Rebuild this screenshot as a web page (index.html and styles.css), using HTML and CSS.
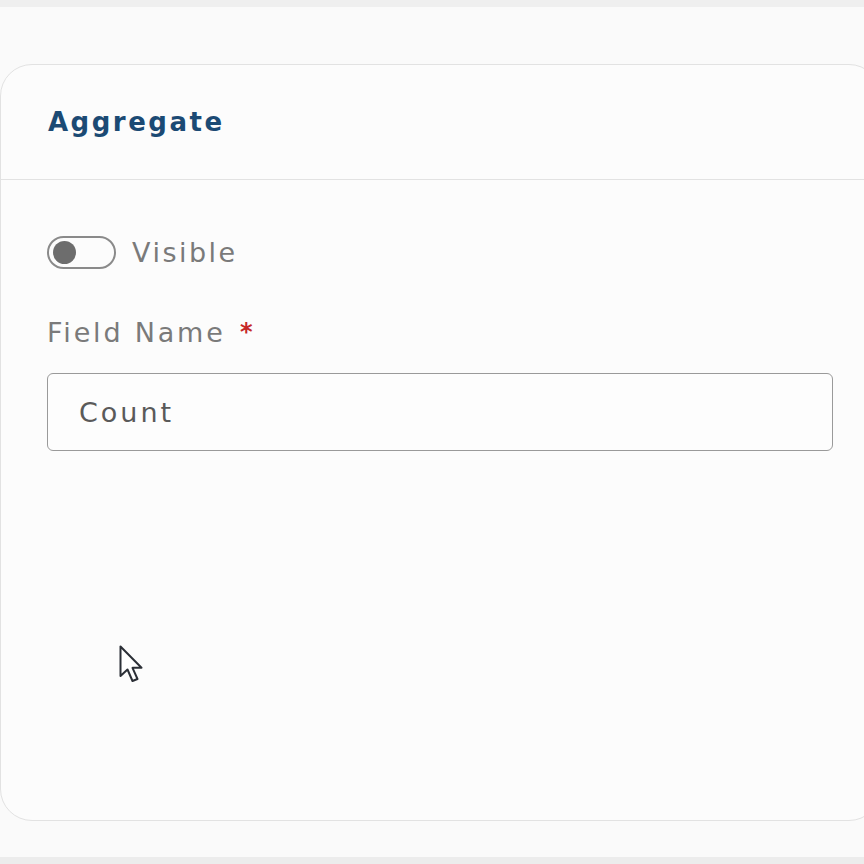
FILE: index.html
```html
<!DOCTYPE html>
<html>
<head>
<meta charset="utf-8">
<link rel="stylesheet" href="styles.css">
</head>
<body>
<div class="topstrip"></div>
<div class="page">
  <section class="card">
    <header class="card-header">
      <h2 class="title">Aggregate</h2>
    </header>
    <div class="card-body">
      <label class="toggle-row">
        <span class="toggle"><span class="knob"></span></span>
        <span class="toggle-label">Visible</span>
      </label>
      <div class="field">
        <div class="field-label">Field Name <span class="req">*</span></div>
        <div class="input">Count</div>
      </div>
    </div>
  </section>
</div>
<div class="bottomstrip"></div>
<svg class="cursor" width="26" height="38" viewBox="0 0 26 38">
  <path d="M1.5 1.5 L1.5 31 L8.5 24.5 L13.5 36 L18.5 34 L13.5 22.8 L22.5 22.8 Z" fill="#fff" stroke="#2b2f36" stroke-width="2" stroke-linejoin="round"/>
</svg>
</body>
</html>
```
FILE: styles.css
```css
html, body {
  margin: 0;
  padding: 0;
  width: 864px;
  height: 864px;
  overflow: hidden;
  background: #fafafa;
  font-family: "DejaVu Sans", "Liberation Sans", sans-serif;
}
body { position: relative; }
.topstrip {
  height: 7px;
  background: #efefef;
}
.page {
  padding-top: 57px;
  height: 850px;
  box-sizing: border-box;
}
.bottomstrip {
  height: 7px;
  background: #ececec;
}
.card {
  width: 881px;
  height: 757px;
  box-sizing: border-box;
  background: #fcfcfc;
  border: 1.5px solid #e2e2e2;
  border-radius: 32px;
}
.card-header {
  height: 115px;
  box-sizing: border-box;
  border-bottom: 1.5px solid #e2e2e2;
  display: flex;
  align-items: center;
  padding: 0 47px;
}
.title {
  margin: 0;
  font-size: 26px;
  font-weight: 600;
  color: #1b4a74;
  letter-spacing: 2.5px;
}
.card-body {
  padding: 56px 47px 0 46px;
}
.toggle-row {
  display: flex;
  align-items: center;
  gap: 16px;
  height: 32px;
}
.toggle {
  width: 69px;
  height: 33px;
  box-sizing: border-box;
  border: 2px solid #8a8a8a;
  border-radius: 17px;
  display: flex;
  align-items: center;
  padding-left: 4px;
}
.knob {
  width: 23px;
  height: 23px;
  border-radius: 50%;
  background: #6d6d6d;
}
.toggle-label {
  font-size: 27px;
  color: #7a7a7a;
  letter-spacing: 2.5px;
}
.field { margin-top: 46px; }
.field-label {
  font-size: 27px;
  color: #7a7a7a;
  height: 36px;
  line-height: 36px;
  letter-spacing: 2.8px;
}
.req {
  color: #c62828;
  font-weight: 700;
  font-size: 24px;
  margin-left: 3px;
  vertical-align: 2px;
}
.input {
  margin-top: 23px;
  height: 78px;
  box-sizing: border-box;
  border: 1.5px solid #9a9a9a;
  border-radius: 6px;
  background: #fdfdfd;
  display: flex;
  align-items: center;
  padding-left: 31px;
  font-size: 27px;
  color: #5a5a5a;
  letter-spacing: 3px;
}
.cursor {
  position: absolute;
  left: 119px;
  top: 645px;
}
```
